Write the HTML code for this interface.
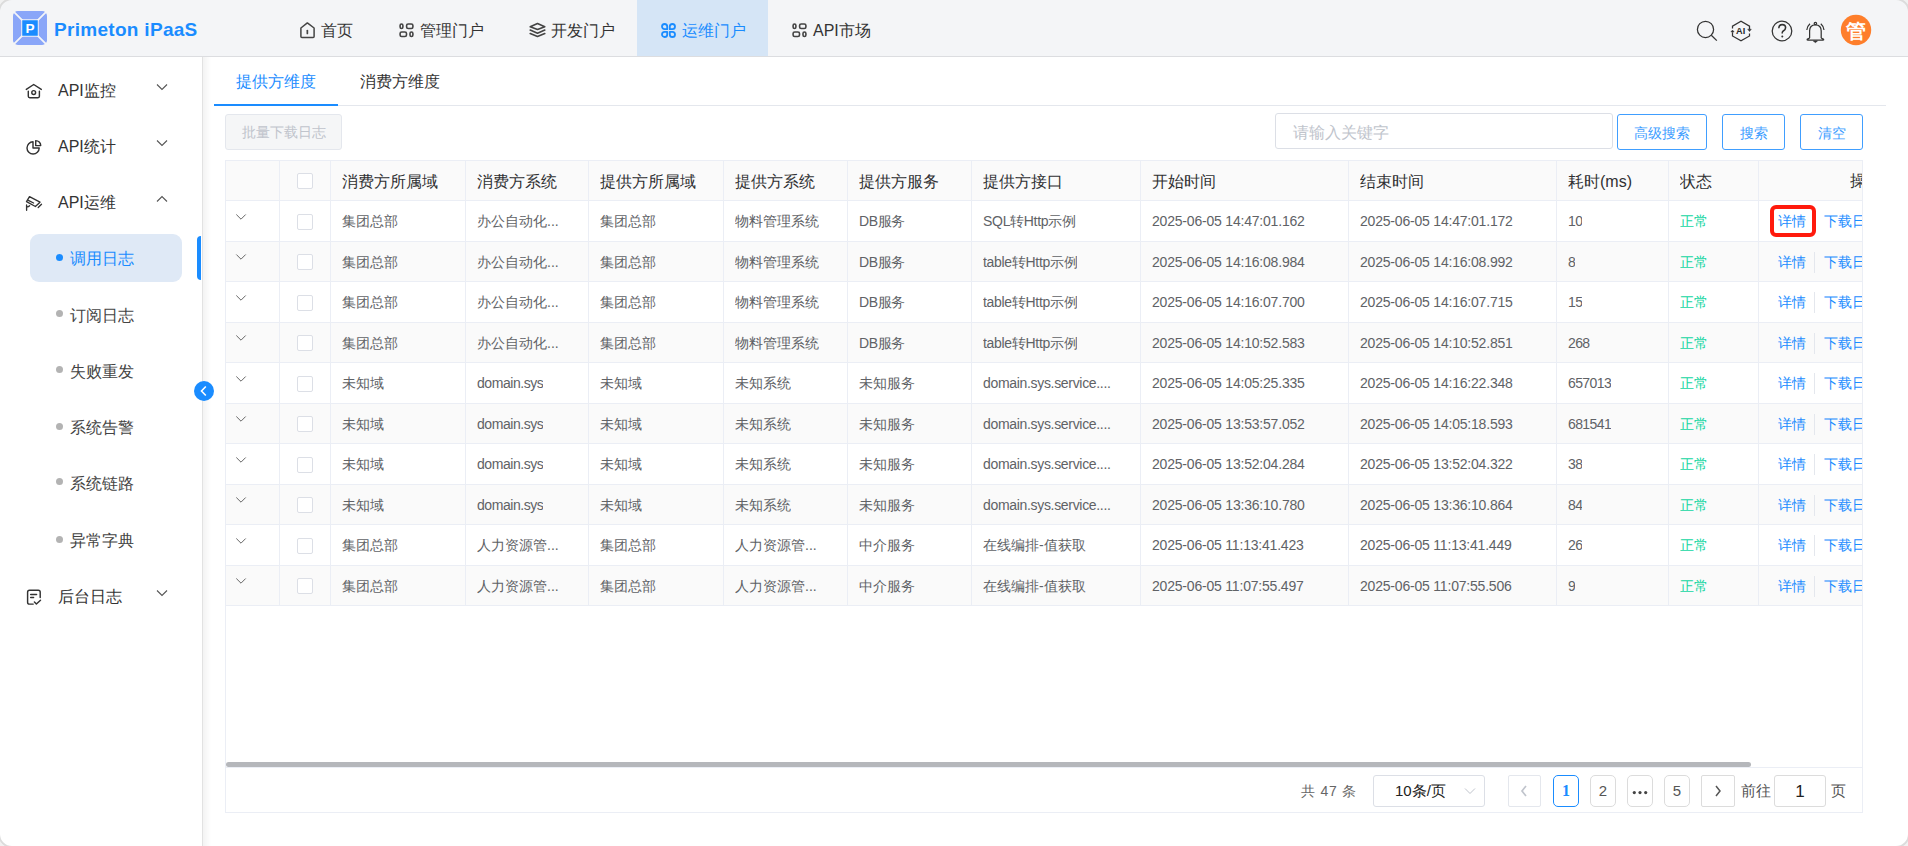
<!DOCTYPE html>
<html><head><meta charset="utf-8">
<style>
*{box-sizing:border-box;margin:0;padding:0}
html,body{width:1908px;height:846px;overflow:hidden;background:#f1f1f1;font-family:"Liberation Sans",sans-serif;}
#win{position:absolute;left:-2px;top:-2px;width:1912px;height:850px;border-radius:14px;overflow:hidden;background:#fff;}
#frame{position:absolute;left:-2px;top:-2px;width:1912px;height:850px;border-radius:14px;border:2px solid #dcdcdc;pointer-events:none}
#inner{position:absolute;left:2px;top:2px;width:1908px;height:846px;}
.abs{position:absolute;white-space:nowrap}
#hdr{position:absolute;left:0;top:0;width:1908px;height:57px;background:#f4f5f7;border-bottom:1px solid #dcdde0;}
.nav{position:absolute;top:0;height:56px;line-height:56px;font-size:16px;color:#333;}
.nav svg{position:absolute;top:21px}
.nav span{position:absolute;top:0}
#side{position:absolute;left:0;top:57px;width:203px;height:789px;background:#fff;border-right:1px solid #e2e2e2;}
#shd{position:absolute;left:203px;top:57px;width:8px;height:789px;background:linear-gradient(to right,#f3f3f3,rgba(255,255,255,0))}
.mi{position:absolute;left:0;width:202px;height:56px;font-size:16px;color:#333}
.mi .t{position:absolute;left:58px;top:18px;line-height:20px}
.mi svg{position:absolute}
.si{position:absolute;left:30px;width:152px;height:48px;font-size:16px;color:#444}
.si .dot{position:absolute;left:27px;top:21px;width:7px;height:7px;border-radius:50%;background:#b3b3b3}
.si .t{position:absolute;left:40px;top:14px;line-height:20px}
.cell{position:absolute;overflow:hidden;white-space:nowrap}
.hd{font-size:16px;color:#303133;}
.td{font-size:14px;color:#606266;}
</style></head><body><div id="win"><div id="inner">

<div id="hdr">
<svg class="abs" style="left:13px;top:11px" width="34" height="34" viewBox="0 0 35 35">
<rect x="0" y="0" width="35" height="35" rx="5" fill="#8aa6f8"/>
<path d="M0 0 L35 35 M35 0 L0 35" stroke="#f4f5f7" stroke-width="1.8"/>
<rect x="8.5" y="8.5" width="18" height="18" fill="#f4f5f7"/>
<rect x="9.5" y="9.5" width="16" height="16" fill="#1a8cff"/>
<text x="17.5" y="23" text-anchor="middle" font-family="Liberation Sans" font-weight="bold" font-size="14" fill="#fff">P</text>
</svg>
<div class="abs" style="left:54px;top:19px;font-size:19px;line-height:22px;font-weight:bold;color:#1a8cff;letter-spacing:0.3px">Primeton iPaaS</div>
<div class="abs" style="left:637px;top:0;width:131px;height:56px;background:#d5e5f6"></div>
<div class="abs" style="left:300px;top:22px"><svg width="16" height="17" viewBox="0 0 16 17" fill="none" stroke="#444" stroke-width="1.5" stroke-linejoin="round" stroke-linecap="round"><path d="M0.9 6 L7.35 0.9 L14.1 6 V14.5 Q14.1 15.5 13.1 15.5 H1.9 Q0.9 15.5 0.9 14.5 Z"/><path d="M7.35 8.6 V11.4" stroke-width="1.7"/></svg></div>
<div class="abs" style="left:321px;top:20.5px;font-size:16px;line-height:20px;color:#333">首页</div>
<div class="abs" style="left:399px;top:22px"><svg width="16" height="17" viewBox="0 0 16 17" fill="none" stroke="#444" stroke-width="1.6"><rect x="1.1" y="2" width="2.8" height="4.5" rx="1.4"/><rect x="7.6" y="2" width="6.3" height="4.5" rx="1.6"/><rect x="1.1" y="10" width="6.4" height="4.5" rx="1.6"/><rect x="11" y="10" width="2.9" height="4.5" rx="1.4"/></svg></div>
<div class="abs" style="left:420px;top:20.5px;font-size:16px;line-height:20px;color:#333">管理门户</div>
<div class="abs" style="left:529px;top:22px"><svg width="17" height="17" viewBox="0 0 17 17" fill="none" stroke="#444" stroke-width="1.6" stroke-linejoin="round" stroke-linecap="round"><path d="M8.5 1.5 L15.8 4.7 L8.5 7.4 L1.2 4.7 Z"/><path d="M1.2 8 L8.5 11.2 L15.8 8"/><path d="M1.2 11.5 L8.5 14.5 L15.8 11.5"/></svg></div>
<div class="abs" style="left:551px;top:20.5px;font-size:16px;line-height:20px;color:#333">开发门户</div>
<div class="abs" style="left:661px;top:22px"><svg width="16" height="17" viewBox="0 0 16 17" fill="none" stroke="#1a8cff" stroke-width="1.8" stroke-linejoin="round"><path d="M6.2 7.2 H3.6 A2.6 2.6 0 1 1 6.2 4.6 Z"/><path d="M8.8 7.2 V4.6 A2.6 2.6 0 1 1 11.4 7.2 Z"/><path d="M6.2 9.8 V12.4 A2.6 2.6 0 1 1 3.6 9.8 Z"/><path d="M8.8 9.8 H11.4 A2.6 2.6 0 1 1 8.8 12.4 Z"/></svg></div>
<div class="abs" style="left:682px;top:20.5px;font-size:16px;line-height:20px;color:#1a8cff">运维门户</div>
<div class="abs" style="left:792px;top:22px"><svg width="16" height="17" viewBox="0 0 16 17" fill="none" stroke="#444" stroke-width="1.6"><rect x="1.1" y="2" width="2.8" height="4.5" rx="1.4"/><rect x="7.6" y="2" width="6.3" height="4.5" rx="1.6"/><rect x="1.1" y="10" width="6.4" height="4.5" rx="1.6"/><rect x="11" y="10" width="2.9" height="4.5" rx="1.4"/></svg></div>
<div class="abs" style="left:813px;top:20.5px;font-size:16px;line-height:20px;color:#333">API市场</div>
<svg class="abs" style="left:1690px;top:14px" width="190" height="34" viewBox="1690 14 190 34">
<g fill="none" stroke="#333" stroke-width="1.25">
<circle cx="1705.5" cy="29.4" r="8.1"/><path d="M1711.3 35.2 L1716.8 40.6"/>
<path d="M1732.5 28.5 V26.2 L1741 21.3 L1749.5 26.2 V29.5"/>
<path d="M1749.5 33.6 V36 L1741 40.8 L1732.5 36 V32.3"/>
<circle cx="1782" cy="31" r="9.8"/>
<path d="M1778.8 28.3 Q1778.8 24.6 1782.2 24.6 Q1785.6 24.6 1785.6 27.8 Q1785.6 29.8 1783 31.2 Q1782.2 31.8 1782.2 33.6" stroke-width="1.6"/>
<path d="M1806.8 30 Q1807.4 25.8 1810 23.7 M1824 30 Q1823.4 25.8 1820.8 23.7"/>
<path d="M1809.6 37.8 V31 Q1809.6 24.8 1815.4 24.8 Q1821.2 24.8 1821.2 31 V37.8 Q1821.5 38.6 1823.5 39.2 Q1824 40 1823 40 H1807.8 Q1806.8 40 1807.3 39.2 Q1809.3 38.6 1809.6 37.8 Z"/>
<circle cx="1815.4" cy="23.5" r="1.2"/>
</g>
<path d="M1747.7 29.2 H1751.3 L1749.5 31.5 Z M1730.9 31.9 H1734.1 L1732.5 30 Z" fill="#333" stroke="#333" stroke-width="0.5"/>
<circle cx="1782.3" cy="36.6" r="1" fill="#333"/>
<path d="M1813.4 41 H1817.4 L1815.4 42.6 Z" fill="#333" stroke="#333" stroke-width="0.8"/>
<text x="1740.6" y="33.8" text-anchor="middle" font-family="Liberation Sans" font-weight="bold" font-size="9.2" fill="#2a2a2a">AI</text>
<circle cx="1856" cy="30" r="15.2" fill="#fe7e2b"/>
</svg>
<div class="abs" style="left:1846px;top:20px;font-size:20px;line-height:22px;font-weight:bold;color:#fff">管</div>
</div>
<div id="side">
<div class="abs" style="left:58px;top:24px;font-size:16px;line-height:20px;color:#333">API监控</div>
<div class="abs" style="left:22px;top:23px"><svg width="24" height="22" viewBox="22 80 24 22" fill="none" stroke="#333" stroke-width="1.45" stroke-linejoin="round" stroke-linecap="round"><path d="M26.3 89.4 L33.7 84.5 L41.3 89.4"/><path d="M28.3 91.3 V96.3 Q28.3 97.7 29.7 97.7 H38 Q39.4 97.7 39.4 96.3 V91.3"/><circle cx="33.7" cy="92.5" r="1.9"/></svg></div>
<svg class="abs" style="left:156px;top:26px" width="12" height="8" viewBox="0 0 12 8" fill="none" stroke="#555" stroke-width="1.1"><path d="M1 1.5 L6 6.5 L11 1.5"/></svg>
<div class="abs" style="left:58px;top:80px;font-size:16px;line-height:20px;color:#333">API统计</div>
<div class="abs" style="left:22px;top:79px"><svg width="24" height="22" viewBox="22 136 24 22" fill="none" stroke="#333" stroke-width="1.45" stroke-linejoin="round"><path d="M33 141.8 A6.1 6.1 0 1 0 39.2 148 H33 Z"/><path d="M35.7 140.6 V145.6 H40.7 A5 5 0 0 0 35.7 140.6 Z"/></svg></div>
<svg class="abs" style="left:156px;top:82px" width="12" height="8" viewBox="0 0 12 8" fill="none" stroke="#555" stroke-width="1.1"><path d="M1 1.5 L6 6.5 L11 1.5"/></svg>
<div class="abs" style="left:58px;top:136px;font-size:16px;line-height:20px;color:#333">API运维</div>
<div class="abs" style="left:22px;top:135px"><svg width="24" height="22" viewBox="22 192 24 22" fill="none" stroke="#333" stroke-width="1.35" stroke-linejoin="round" stroke-linecap="round"><path d="M29.5 196.6 L40 202.2 L35.4 206.5 L26.5 201.6 Z"/><path d="M28.3 200.4 L33.6 203"/><path d="M26.6 205 V210.2 M26.6 207.2 Q28.6 207 29.6 205.8"/><path d="M38.2 207.6 L41.5 204.3"/></svg></div>
<svg class="abs" style="left:156px;top:138px" width="12" height="8" viewBox="0 0 12 8" fill="none" stroke="#555" stroke-width="1.1"><path d="M1 6.5 L6 1.5 L11 6.5"/></svg>
<div class="abs" style="left:58px;top:530px;font-size:16px;line-height:20px;color:#333">后台日志</div>
<div class="abs" style="left:22px;top:529px"><svg width="24" height="22" viewBox="22 586 24 22" fill="none" stroke="#333" stroke-width="1.45" stroke-linejoin="round" stroke-linecap="round"><path d="M40.2 597.6 V592.2 Q40.2 590.3 38.3 590.3 H29.5 Q27.6 590.3 27.6 592.2 V602.2 Q27.6 604.1 29.5 604.1 H33.2"/><path d="M30.7 594.4 H36.6 M30.7 597.4 H33.6"/><path d="M34.4 602 L36.4 604 L40.5 600.2"/></svg></div>
<svg class="abs" style="left:156px;top:532px" width="12" height="8" viewBox="0 0 12 8" fill="none" stroke="#555" stroke-width="1.1"><path d="M1 1.5 L6 6.5 L11 1.5"/></svg>
<div class="abs" style="left:30px;top:177px;width:152px;height:48px;border-radius:9px;background:#dfe9f6"></div>
<div class="abs" style="left:197px;top:179px;width:4px;height:44px;border-radius:4px 0 0 4px;background:#1a8cff"></div>
<div class="abs" style="left:56px;top:197px;width:7px;height:7px;border-radius:50%;background:#1a8cff"></div>
<div class="abs" style="left:70px;top:191.5px;font-size:16px;line-height:20px;color:#1a8cff">调用日志</div>
<div class="abs" style="left:56px;top:253.2px;width:7px;height:7px;border-radius:50%;background:#b3b3b3"></div>
<div class="abs" style="left:70px;top:248.5px;font-size:16px;line-height:20px;color:#444">订阅日志</div>
<div class="abs" style="left:56px;top:309.2px;width:7px;height:7px;border-radius:50%;background:#b3b3b3"></div>
<div class="abs" style="left:70px;top:304.5px;font-size:16px;line-height:20px;color:#444">失败重发</div>
<div class="abs" style="left:56px;top:365.5px;width:7px;height:7px;border-radius:50%;background:#b3b3b3"></div>
<div class="abs" style="left:70px;top:360.8px;font-size:16px;line-height:20px;color:#444">系统告警</div>
<div class="abs" style="left:56px;top:421.2px;width:7px;height:7px;border-radius:50%;background:#b3b3b3"></div>
<div class="abs" style="left:70px;top:416.5px;font-size:16px;line-height:20px;color:#444">系统链路</div>
<div class="abs" style="left:56px;top:478.7px;width:7px;height:7px;border-radius:50%;background:#b3b3b3"></div>
<div class="abs" style="left:70px;top:474.0px;font-size:16px;line-height:20px;color:#444">异常字典</div>
</div>
<div id="shd"></div>
<div class="abs" style="left:236px;top:71.5px;font-size:16px;line-height:20px;color:#1a8cff">提供方维度</div>
<div class="abs" style="left:360px;top:71.5px;font-size:16px;line-height:20px;color:#333">消费方维度</div>
<div class="abs" style="left:214px;top:105px;width:1672px;height:1px;background:#e4e7ed"></div>
<div class="abs" style="left:214px;top:104px;width:124px;height:2px;background:#1a8cff"></div>
<div class="abs" style="left:225px;top:114px;width:117px;height:36px;border:1px solid #e4e7ed;border-radius:3px;background:#f5f6f7;font-size:14px;line-height:34px;color:#c0c4cc;text-align:center">批量下载日志</div>
<div class="abs" style="left:1275px;top:113px;width:338px;height:36px;border:1px solid #dcdfe6;border-radius:3px;background:#fff;font-size:16px;line-height:34px;color:#c0c4cc;padding-left:17px;padding-top:2px">请输入关键字</div>
<div class="abs" style="left:1617px;top:114px;width:90px;height:36px;border:1px solid #409eff;border-radius:3px;background:#fff;font-size:14px;line-height:34px;padding-top:1px;color:#409eff;text-align:center">高级搜索</div>
<div class="abs" style="left:1722px;top:114px;width:63px;height:36px;border:1px solid #409eff;border-radius:3px;background:#fff;font-size:14px;line-height:34px;padding-top:1px;color:#409eff;text-align:center">搜索</div>
<div class="abs" style="left:1800px;top:114px;width:63px;height:36px;border:1px solid #409eff;border-radius:3px;background:#fff;font-size:14px;line-height:34px;padding-top:1px;color:#409eff;text-align:center">清空</div>
<div class="abs" style="left:225px;top:160px;width:1638px;height:653px;overflow:hidden;border:1px solid #ebeef5;background:#fff">
<div class="abs" style="left:0;top:0;width:1700px;height:40px;background:#fafafa;border-bottom:1px solid #ebeef5"></div>
<div class="abs" style="left:0;top:40.0px;width:1700px;height:40.5px;background:#fff;border-bottom:1px solid #ebeef5"></div>
<div class="abs" style="left:0;top:80.5px;width:1700px;height:40.5px;background:#fafafa;border-bottom:1px solid #ebeef5"></div>
<div class="abs" style="left:0;top:121.0px;width:1700px;height:40.5px;background:#fff;border-bottom:1px solid #ebeef5"></div>
<div class="abs" style="left:0;top:161.5px;width:1700px;height:40.5px;background:#fafafa;border-bottom:1px solid #ebeef5"></div>
<div class="abs" style="left:0;top:202.0px;width:1700px;height:40.5px;background:#fff;border-bottom:1px solid #ebeef5"></div>
<div class="abs" style="left:0;top:242.5px;width:1700px;height:40.5px;background:#fafafa;border-bottom:1px solid #ebeef5"></div>
<div class="abs" style="left:0;top:283.0px;width:1700px;height:40.5px;background:#fff;border-bottom:1px solid #ebeef5"></div>
<div class="abs" style="left:0;top:323.5px;width:1700px;height:40.5px;background:#fafafa;border-bottom:1px solid #ebeef5"></div>
<div class="abs" style="left:0;top:364.0px;width:1700px;height:40.5px;background:#fff;border-bottom:1px solid #ebeef5"></div>
<div class="abs" style="left:0;top:404.5px;width:1700px;height:40.5px;background:#fafafa;border-bottom:1px solid #ebeef5"></div>
<div class="abs" style="left:53px;top:0;width:1px;height:444px;background:#ebeef5"></div>
<div class="abs" style="left:104px;top:0;width:1px;height:444px;background:#ebeef5"></div>
<div class="abs" style="left:239px;top:0;width:1px;height:444px;background:#ebeef5"></div>
<div class="abs" style="left:362px;top:0;width:1px;height:444px;background:#ebeef5"></div>
<div class="abs" style="left:497px;top:0;width:1px;height:444px;background:#ebeef5"></div>
<div class="abs" style="left:621px;top:0;width:1px;height:444px;background:#ebeef5"></div>
<div class="abs" style="left:745px;top:0;width:1px;height:444px;background:#ebeef5"></div>
<div class="abs" style="left:914px;top:0;width:1px;height:444px;background:#ebeef5"></div>
<div class="abs" style="left:1122px;top:0;width:1px;height:444px;background:#ebeef5"></div>
<div class="abs" style="left:1330px;top:0;width:1px;height:444px;background:#ebeef5"></div>
<div class="abs" style="left:1442px;top:0;width:1px;height:444px;background:#ebeef5"></div>
<div class="abs" style="left:1532px;top:0;width:1px;height:444px;background:#ebeef5"></div>
<div class="cell hd" style="left:116px;top:10.5px;line-height:20px">消费方所属域</div>
<div class="cell hd" style="left:251px;top:10.5px;line-height:20px">消费方系统</div>
<div class="cell hd" style="left:374px;top:10.5px;line-height:20px">提供方所属域</div>
<div class="cell hd" style="left:509px;top:10.5px;line-height:20px">提供方系统</div>
<div class="cell hd" style="left:633px;top:10.5px;line-height:20px">提供方服务</div>
<div class="cell hd" style="left:757px;top:10.5px;line-height:20px">提供方接口</div>
<div class="cell hd" style="left:926px;top:10.5px;line-height:20px">开始时间</div>
<div class="cell hd" style="left:1134px;top:10.5px;line-height:20px">结束时间</div>
<div class="cell hd" style="left:1342px;top:10.5px;line-height:20px">耗时(ms)</div>
<div class="cell hd" style="left:1454px;top:10.5px;line-height:20px">状态</div>
<div class="cell hd" style="left:1624px;top:10px;line-height:20px">操作</div>
<div class="abs" style="left:71px;top:12px;width:16px;height:16px;border:1px solid #dcdfe6;border-radius:2px;background:#fff"></div>
<svg class="abs" style="left:9px;top:51.75px" width="12" height="8" viewBox="0 0 12 8" fill="none" stroke="#666" stroke-width="1"><path d="M1.3 1.5 L6 6.2 L10.7 1.5"/></svg>
<div class="abs" style="left:71px;top:53px;width:16px;height:16px;border:1px solid #dcdfe6;border-radius:2px;background:#fff"></div>
<div class="cell td" style="left:116px;top:50px;line-height:20px;letter-spacing:0px">集团总部</div>
<div class="cell td" style="left:251px;top:50px;line-height:20px;letter-spacing:0px">办公自动化...</div>
<div class="cell td" style="left:374px;top:50px;line-height:20px;letter-spacing:0px">集团总部</div>
<div class="cell td" style="left:509px;top:50px;line-height:20px;letter-spacing:0px">物料管理系统</div>
<div class="cell td" style="left:633px;top:50px;line-height:20px;letter-spacing:-0.4px">DB服务</div>
<div class="cell td" style="left:757px;top:50px;line-height:20px;letter-spacing:-0.3px">SQL转Http示例</div>
<div class="cell td" style="left:926px;top:50px;line-height:20px;letter-spacing:-0.2px">2025-06-05 14:47:01.162</div>
<div class="cell td" style="left:1134px;top:50px;line-height:20px;letter-spacing:-0.2px">2025-06-05 14:47:01.172</div>
<div class="cell td" style="left:1342px;top:50px;line-height:20px;letter-spacing:-0.6px">10</div>
<div class="cell td" style="left:1454px;top:50px;line-height:20px;color:#12d6a2">正常</div>
<div class="cell td" style="left:1552px;top:50px;line-height:20px;color:#1a8cff">详情</div>
<div class="abs" style="left:1588px;top:50px;width:1px;height:21px;background:#e4e7ed"></div>
<div class="cell td" style="left:1598px;top:50px;line-height:20px;color:#1a8cff">下载日志</div>
<svg class="abs" style="left:9px;top:92.25px" width="12" height="8" viewBox="0 0 12 8" fill="none" stroke="#666" stroke-width="1"><path d="M1.3 1.5 L6 6.2 L10.7 1.5"/></svg>
<div class="abs" style="left:71px;top:93px;width:16px;height:16px;border:1px solid #dcdfe6;border-radius:2px;background:#fff"></div>
<div class="cell td" style="left:116px;top:91px;line-height:20px;letter-spacing:0px">集团总部</div>
<div class="cell td" style="left:251px;top:91px;line-height:20px;letter-spacing:0px">办公自动化...</div>
<div class="cell td" style="left:374px;top:91px;line-height:20px;letter-spacing:0px">集团总部</div>
<div class="cell td" style="left:509px;top:91px;line-height:20px;letter-spacing:0px">物料管理系统</div>
<div class="cell td" style="left:633px;top:91px;line-height:20px;letter-spacing:-0.4px">DB服务</div>
<div class="cell td" style="left:757px;top:91px;line-height:20px;letter-spacing:-0.3px">table转Http示例</div>
<div class="cell td" style="left:926px;top:91px;line-height:20px;letter-spacing:-0.2px">2025-06-05 14:16:08.984</div>
<div class="cell td" style="left:1134px;top:91px;line-height:20px;letter-spacing:-0.2px">2025-06-05 14:16:08.992</div>
<div class="cell td" style="left:1342px;top:91px;line-height:20px;letter-spacing:-0.6px">8</div>
<div class="cell td" style="left:1454px;top:91px;line-height:20px;color:#12d6a2">正常</div>
<div class="cell td" style="left:1552px;top:91px;line-height:20px;color:#1a8cff">详情</div>
<div class="abs" style="left:1588px;top:91px;width:1px;height:21px;background:#e4e7ed"></div>
<div class="cell td" style="left:1598px;top:91px;line-height:20px;color:#1a8cff">下载日志</div>
<svg class="abs" style="left:9px;top:132.75px" width="12" height="8" viewBox="0 0 12 8" fill="none" stroke="#666" stroke-width="1"><path d="M1.3 1.5 L6 6.2 L10.7 1.5"/></svg>
<div class="abs" style="left:71px;top:134px;width:16px;height:16px;border:1px solid #dcdfe6;border-radius:2px;background:#fff"></div>
<div class="cell td" style="left:116px;top:131px;line-height:20px;letter-spacing:0px">集团总部</div>
<div class="cell td" style="left:251px;top:131px;line-height:20px;letter-spacing:0px">办公自动化...</div>
<div class="cell td" style="left:374px;top:131px;line-height:20px;letter-spacing:0px">集团总部</div>
<div class="cell td" style="left:509px;top:131px;line-height:20px;letter-spacing:0px">物料管理系统</div>
<div class="cell td" style="left:633px;top:131px;line-height:20px;letter-spacing:-0.4px">DB服务</div>
<div class="cell td" style="left:757px;top:131px;line-height:20px;letter-spacing:-0.3px">table转Http示例</div>
<div class="cell td" style="left:926px;top:131px;line-height:20px;letter-spacing:-0.2px">2025-06-05 14:16:07.700</div>
<div class="cell td" style="left:1134px;top:131px;line-height:20px;letter-spacing:-0.2px">2025-06-05 14:16:07.715</div>
<div class="cell td" style="left:1342px;top:131px;line-height:20px;letter-spacing:-0.6px">15</div>
<div class="cell td" style="left:1454px;top:131px;line-height:20px;color:#12d6a2">正常</div>
<div class="cell td" style="left:1552px;top:131px;line-height:20px;color:#1a8cff">详情</div>
<div class="abs" style="left:1588px;top:131px;width:1px;height:21px;background:#e4e7ed"></div>
<div class="cell td" style="left:1598px;top:131px;line-height:20px;color:#1a8cff">下载日志</div>
<svg class="abs" style="left:9px;top:173.25px" width="12" height="8" viewBox="0 0 12 8" fill="none" stroke="#666" stroke-width="1"><path d="M1.3 1.5 L6 6.2 L10.7 1.5"/></svg>
<div class="abs" style="left:71px;top:174px;width:16px;height:16px;border:1px solid #dcdfe6;border-radius:2px;background:#fff"></div>
<div class="cell td" style="left:116px;top:172px;line-height:20px;letter-spacing:0px">集团总部</div>
<div class="cell td" style="left:251px;top:172px;line-height:20px;letter-spacing:0px">办公自动化...</div>
<div class="cell td" style="left:374px;top:172px;line-height:20px;letter-spacing:0px">集团总部</div>
<div class="cell td" style="left:509px;top:172px;line-height:20px;letter-spacing:0px">物料管理系统</div>
<div class="cell td" style="left:633px;top:172px;line-height:20px;letter-spacing:-0.4px">DB服务</div>
<div class="cell td" style="left:757px;top:172px;line-height:20px;letter-spacing:-0.3px">table转Http示例</div>
<div class="cell td" style="left:926px;top:172px;line-height:20px;letter-spacing:-0.2px">2025-06-05 14:10:52.583</div>
<div class="cell td" style="left:1134px;top:172px;line-height:20px;letter-spacing:-0.2px">2025-06-05 14:10:52.851</div>
<div class="cell td" style="left:1342px;top:172px;line-height:20px;letter-spacing:-0.6px">268</div>
<div class="cell td" style="left:1454px;top:172px;line-height:20px;color:#12d6a2">正常</div>
<div class="cell td" style="left:1552px;top:172px;line-height:20px;color:#1a8cff">详情</div>
<div class="abs" style="left:1588px;top:172px;width:1px;height:21px;background:#e4e7ed"></div>
<div class="cell td" style="left:1598px;top:172px;line-height:20px;color:#1a8cff">下载日志</div>
<svg class="abs" style="left:9px;top:213.75px" width="12" height="8" viewBox="0 0 12 8" fill="none" stroke="#666" stroke-width="1"><path d="M1.3 1.5 L6 6.2 L10.7 1.5"/></svg>
<div class="abs" style="left:71px;top:215px;width:16px;height:16px;border:1px solid #dcdfe6;border-radius:2px;background:#fff"></div>
<div class="cell td" style="left:116px;top:212px;line-height:20px;letter-spacing:0px">未知域</div>
<div class="cell td" style="left:251px;top:212px;line-height:20px;letter-spacing:-0.45px">domain.sys</div>
<div class="cell td" style="left:374px;top:212px;line-height:20px;letter-spacing:0px">未知域</div>
<div class="cell td" style="left:509px;top:212px;line-height:20px;letter-spacing:0px">未知系统</div>
<div class="cell td" style="left:633px;top:212px;line-height:20px;letter-spacing:0px">未知服务</div>
<div class="cell td" style="left:757px;top:212px;line-height:20px;letter-spacing:-0.32px">domain.sys.service....</div>
<div class="cell td" style="left:926px;top:212px;line-height:20px;letter-spacing:-0.2px">2025-06-05 14:05:25.335</div>
<div class="cell td" style="left:1134px;top:212px;line-height:20px;letter-spacing:-0.2px">2025-06-05 14:16:22.348</div>
<div class="cell td" style="left:1342px;top:212px;line-height:20px;letter-spacing:-0.6px">657013</div>
<div class="cell td" style="left:1454px;top:212px;line-height:20px;color:#12d6a2">正常</div>
<div class="cell td" style="left:1552px;top:212px;line-height:20px;color:#1a8cff">详情</div>
<div class="abs" style="left:1588px;top:212px;width:1px;height:21px;background:#e4e7ed"></div>
<div class="cell td" style="left:1598px;top:212px;line-height:20px;color:#1a8cff">下载日志</div>
<svg class="abs" style="left:9px;top:254.25px" width="12" height="8" viewBox="0 0 12 8" fill="none" stroke="#666" stroke-width="1"><path d="M1.3 1.5 L6 6.2 L10.7 1.5"/></svg>
<div class="abs" style="left:71px;top:255px;width:16px;height:16px;border:1px solid #dcdfe6;border-radius:2px;background:#fff"></div>
<div class="cell td" style="left:116px;top:253px;line-height:20px;letter-spacing:0px">未知域</div>
<div class="cell td" style="left:251px;top:253px;line-height:20px;letter-spacing:-0.45px">domain.sys</div>
<div class="cell td" style="left:374px;top:253px;line-height:20px;letter-spacing:0px">未知域</div>
<div class="cell td" style="left:509px;top:253px;line-height:20px;letter-spacing:0px">未知系统</div>
<div class="cell td" style="left:633px;top:253px;line-height:20px;letter-spacing:0px">未知服务</div>
<div class="cell td" style="left:757px;top:253px;line-height:20px;letter-spacing:-0.32px">domain.sys.service....</div>
<div class="cell td" style="left:926px;top:253px;line-height:20px;letter-spacing:-0.2px">2025-06-05 13:53:57.052</div>
<div class="cell td" style="left:1134px;top:253px;line-height:20px;letter-spacing:-0.2px">2025-06-05 14:05:18.593</div>
<div class="cell td" style="left:1342px;top:253px;line-height:20px;letter-spacing:-0.6px">681541</div>
<div class="cell td" style="left:1454px;top:253px;line-height:20px;color:#12d6a2">正常</div>
<div class="cell td" style="left:1552px;top:253px;line-height:20px;color:#1a8cff">详情</div>
<div class="abs" style="left:1588px;top:253px;width:1px;height:21px;background:#e4e7ed"></div>
<div class="cell td" style="left:1598px;top:253px;line-height:20px;color:#1a8cff">下载日志</div>
<svg class="abs" style="left:9px;top:294.75px" width="12" height="8" viewBox="0 0 12 8" fill="none" stroke="#666" stroke-width="1"><path d="M1.3 1.5 L6 6.2 L10.7 1.5"/></svg>
<div class="abs" style="left:71px;top:296px;width:16px;height:16px;border:1px solid #dcdfe6;border-radius:2px;background:#fff"></div>
<div class="cell td" style="left:116px;top:293px;line-height:20px;letter-spacing:0px">未知域</div>
<div class="cell td" style="left:251px;top:293px;line-height:20px;letter-spacing:-0.45px">domain.sys</div>
<div class="cell td" style="left:374px;top:293px;line-height:20px;letter-spacing:0px">未知域</div>
<div class="cell td" style="left:509px;top:293px;line-height:20px;letter-spacing:0px">未知系统</div>
<div class="cell td" style="left:633px;top:293px;line-height:20px;letter-spacing:0px">未知服务</div>
<div class="cell td" style="left:757px;top:293px;line-height:20px;letter-spacing:-0.32px">domain.sys.service....</div>
<div class="cell td" style="left:926px;top:293px;line-height:20px;letter-spacing:-0.2px">2025-06-05 13:52:04.284</div>
<div class="cell td" style="left:1134px;top:293px;line-height:20px;letter-spacing:-0.2px">2025-06-05 13:52:04.322</div>
<div class="cell td" style="left:1342px;top:293px;line-height:20px;letter-spacing:-0.6px">38</div>
<div class="cell td" style="left:1454px;top:293px;line-height:20px;color:#12d6a2">正常</div>
<div class="cell td" style="left:1552px;top:293px;line-height:20px;color:#1a8cff">详情</div>
<div class="abs" style="left:1588px;top:293px;width:1px;height:21px;background:#e4e7ed"></div>
<div class="cell td" style="left:1598px;top:293px;line-height:20px;color:#1a8cff">下载日志</div>
<svg class="abs" style="left:9px;top:335.25px" width="12" height="8" viewBox="0 0 12 8" fill="none" stroke="#666" stroke-width="1"><path d="M1.3 1.5 L6 6.2 L10.7 1.5"/></svg>
<div class="abs" style="left:71px;top:336px;width:16px;height:16px;border:1px solid #dcdfe6;border-radius:2px;background:#fff"></div>
<div class="cell td" style="left:116px;top:334px;line-height:20px;letter-spacing:0px">未知域</div>
<div class="cell td" style="left:251px;top:334px;line-height:20px;letter-spacing:-0.45px">domain.sys</div>
<div class="cell td" style="left:374px;top:334px;line-height:20px;letter-spacing:0px">未知域</div>
<div class="cell td" style="left:509px;top:334px;line-height:20px;letter-spacing:0px">未知系统</div>
<div class="cell td" style="left:633px;top:334px;line-height:20px;letter-spacing:0px">未知服务</div>
<div class="cell td" style="left:757px;top:334px;line-height:20px;letter-spacing:-0.32px">domain.sys.service....</div>
<div class="cell td" style="left:926px;top:334px;line-height:20px;letter-spacing:-0.2px">2025-06-05 13:36:10.780</div>
<div class="cell td" style="left:1134px;top:334px;line-height:20px;letter-spacing:-0.2px">2025-06-05 13:36:10.864</div>
<div class="cell td" style="left:1342px;top:334px;line-height:20px;letter-spacing:-0.6px">84</div>
<div class="cell td" style="left:1454px;top:334px;line-height:20px;color:#12d6a2">正常</div>
<div class="cell td" style="left:1552px;top:334px;line-height:20px;color:#1a8cff">详情</div>
<div class="abs" style="left:1588px;top:334px;width:1px;height:21px;background:#e4e7ed"></div>
<div class="cell td" style="left:1598px;top:334px;line-height:20px;color:#1a8cff">下载日志</div>
<svg class="abs" style="left:9px;top:375.75px" width="12" height="8" viewBox="0 0 12 8" fill="none" stroke="#666" stroke-width="1"><path d="M1.3 1.5 L6 6.2 L10.7 1.5"/></svg>
<div class="abs" style="left:71px;top:377px;width:16px;height:16px;border:1px solid #dcdfe6;border-radius:2px;background:#fff"></div>
<div class="cell td" style="left:116px;top:374px;line-height:20px;letter-spacing:0px">集团总部</div>
<div class="cell td" style="left:251px;top:374px;line-height:20px;letter-spacing:0px">人力资源管...</div>
<div class="cell td" style="left:374px;top:374px;line-height:20px;letter-spacing:0px">集团总部</div>
<div class="cell td" style="left:509px;top:374px;line-height:20px;letter-spacing:0px">人力资源管...</div>
<div class="cell td" style="left:633px;top:374px;line-height:20px;letter-spacing:0px">中介服务</div>
<div class="cell td" style="left:757px;top:374px;line-height:20px;letter-spacing:0px">在线编排-值获取</div>
<div class="cell td" style="left:926px;top:374px;line-height:20px;letter-spacing:-0.2px">2025-06-05 11:13:41.423</div>
<div class="cell td" style="left:1134px;top:374px;line-height:20px;letter-spacing:-0.2px">2025-06-05 11:13:41.449</div>
<div class="cell td" style="left:1342px;top:374px;line-height:20px;letter-spacing:-0.6px">26</div>
<div class="cell td" style="left:1454px;top:374px;line-height:20px;color:#12d6a2">正常</div>
<div class="cell td" style="left:1552px;top:374px;line-height:20px;color:#1a8cff">详情</div>
<div class="abs" style="left:1588px;top:374px;width:1px;height:21px;background:#e4e7ed"></div>
<div class="cell td" style="left:1598px;top:374px;line-height:20px;color:#1a8cff">下载日志</div>
<svg class="abs" style="left:9px;top:416.25px" width="12" height="8" viewBox="0 0 12 8" fill="none" stroke="#666" stroke-width="1"><path d="M1.3 1.5 L6 6.2 L10.7 1.5"/></svg>
<div class="abs" style="left:71px;top:417px;width:16px;height:16px;border:1px solid #dcdfe6;border-radius:2px;background:#fff"></div>
<div class="cell td" style="left:116px;top:415px;line-height:20px;letter-spacing:0px">集团总部</div>
<div class="cell td" style="left:251px;top:415px;line-height:20px;letter-spacing:0px">人力资源管...</div>
<div class="cell td" style="left:374px;top:415px;line-height:20px;letter-spacing:0px">集团总部</div>
<div class="cell td" style="left:509px;top:415px;line-height:20px;letter-spacing:0px">人力资源管...</div>
<div class="cell td" style="left:633px;top:415px;line-height:20px;letter-spacing:0px">中介服务</div>
<div class="cell td" style="left:757px;top:415px;line-height:20px;letter-spacing:0px">在线编排-值获取</div>
<div class="cell td" style="left:926px;top:415px;line-height:20px;letter-spacing:-0.2px">2025-06-05 11:07:55.497</div>
<div class="cell td" style="left:1134px;top:415px;line-height:20px;letter-spacing:-0.2px">2025-06-05 11:07:55.506</div>
<div class="cell td" style="left:1342px;top:415px;line-height:20px;letter-spacing:-0.6px">9</div>
<div class="cell td" style="left:1454px;top:415px;line-height:20px;color:#12d6a2">正常</div>
<div class="cell td" style="left:1552px;top:415px;line-height:20px;color:#1a8cff">详情</div>
<div class="abs" style="left:1588px;top:415px;width:1px;height:21px;background:#e4e7ed"></div>
<div class="cell td" style="left:1598px;top:415px;line-height:20px;color:#1a8cff">下载日志</div>
<div class="abs" style="left:0;top:601px;width:1525px;height:5px;border-radius:3px;background:#b5b7bb"></div>
<div class="abs" style="left:0;top:606px;width:1700px;height:1px;background:#ebeef5"></div>
<div class="abs" style="left:1075px;top:620px;font-size:14px;line-height:20px;color:#666;letter-spacing:0.8px">共 47 条</div>
<div class="abs" style="left:1147px;top:614px;width:112px;height:32px;border:1px solid #dcdfe6;border-radius:3px;background:#fff"></div>
<div class="abs" style="left:1169px;top:620px;font-size:15px;line-height:20px;color:#222">10条/页</div>
<svg class="abs" style="left:1238px;top:626px" width="12" height="8" viewBox="0 0 12 8" fill="none" stroke="#c0c4cc" stroke-width="1"><path d="M1 1.5 L6 6.5 L11 1.5"/></svg>
<div class="abs" style="left:1282px;top:614px;width:33px;height:32px;border:1px solid #e4e7ed;border-radius:2px;background:#fff"></div>
<svg class="abs" style="left:1293px;top:622px" width="10" height="16" viewBox="0 0 10 16" fill="none" stroke="#c0c4cc" stroke-width="1.7"><path d="M7 3 L3 8 L7 13"/></svg>
<div class="abs" style="left:1327px;top:614px;width:26px;height:32px;border:1.5px solid #1a8cff;border-radius:5px;background:#fff;font-size:16px;line-height:29px;text-align:center;color:#1a8cff;font-weight:bold;font-family:'Liberation Serif',serif">1</div>
<div class="abs" style="left:1364px;top:614px;width:26px;height:32px;border:1px solid #dcdcdc;border-radius:5px;background:#fff;font-size:15px;line-height:30px;text-align:center;color:#555">2</div>
<div class="abs" style="left:1401px;top:614px;width:26px;height:32px;border:1px solid #dcdcdc;border-radius:5px;background:#fff;font-size:15px;line-height:30px;text-align:center;color:#555"></div>
<div class="abs" style="left:1438px;top:614px;width:26px;height:32px;border:1px solid #dcdcdc;border-radius:5px;background:#fff;font-size:15px;line-height:30px;text-align:center;color:#555">5</div>
<svg class="abs" style="left:1401px;top:614px" width="26" height="32" viewBox="1627 775 26 32"><circle cx="1634.3" cy="792.6" r="1.6" fill="#444"/><circle cx="1640" cy="792.6" r="1.6" fill="#444"/><circle cx="1645.7" cy="792.6" r="1.6" fill="#444"/></svg>
<div class="abs" style="left:1475px;top:614px;width:34px;height:32px;border:1px solid #dcdcdc;border-radius:2px;background:#fff"></div>
<svg class="abs" style="left:1487px;top:622px" width="10" height="16" viewBox="0 0 10 16" fill="none" stroke="#555" stroke-width="1.5"><path d="M3 3 L7 8 L3 13"/></svg>
<div class="abs" style="left:1515px;top:620px;font-size:15px;line-height:20px;color:#555">前往</div>
<div class="abs" style="left:1548px;top:614px;width:52px;height:32px;border:1px solid #dcdcdc;border-radius:3px;background:#fff;font-size:17px;line-height:32px;text-align:center;color:#222">1</div>
<div class="abs" style="left:1605px;top:620px;font-size:15px;line-height:20px;color:#555">页</div>
</div>
<svg class="abs" style="left:194px;top:381px" width="20" height="20" viewBox="0 0 20 20"><circle cx="10" cy="10" r="10" fill="#1a8cff"/><path d="M11.8 5.5 L7.5 10 L11.8 14.5" fill="none" stroke="#fff" stroke-width="1.6"/></svg>
<div class="abs" style="left:1770px;top:205px;width:46px;height:32px;border:4px solid #ff1a0d;border-radius:6px"></div>
</div></div><div id="frame"></div></body></html>
